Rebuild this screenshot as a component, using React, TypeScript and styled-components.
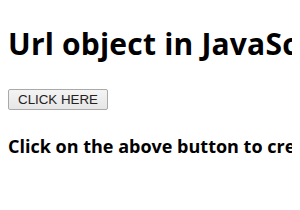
import React from 'react';
import styled, {createGlobalStyle} from 'styled-components';

const GlobalStyle = createGlobalStyle`
  body {
    margin: 8px;
    background: #fff;
    font-family: "Open Sans", "Noto Sans", sans-serif;
    color: #000;
    overflow: hidden;
    white-space: nowrap;
  }
`;

const Title = styled.h1`
  font-size: 30px;
  font-weight: 700;
  letter-spacing: 0.2px;
  margin: 15px 0 23px;
`;

const ClickButton = styled.button`
  box-sizing: border-box;
  height: 21px;
  font-family: "Liberation Sans", Arial, sans-serif;
  font-size: 13.33px;
  line-height: 15px;
  padding: 0 9px;
  background: linear-gradient(#f4f4f4, #e6e6e6);
  border: 1px solid #a9a9a9;
  border-radius: 2px;
  color: #222;
`;

const Note = styled.h3`
  font-size: 18px;
  font-weight: 700;
  margin: 24px 0;
`;

const App = () => {
  return (
    <>
      <GlobalStyle/>
      <Title>Url object in JavaScript</Title>
      <ClickButton>CLICK HERE</ClickButton>
      <Note>Click on the above button to create a new URL object</Note>
    </>
  );
};

export default App;
